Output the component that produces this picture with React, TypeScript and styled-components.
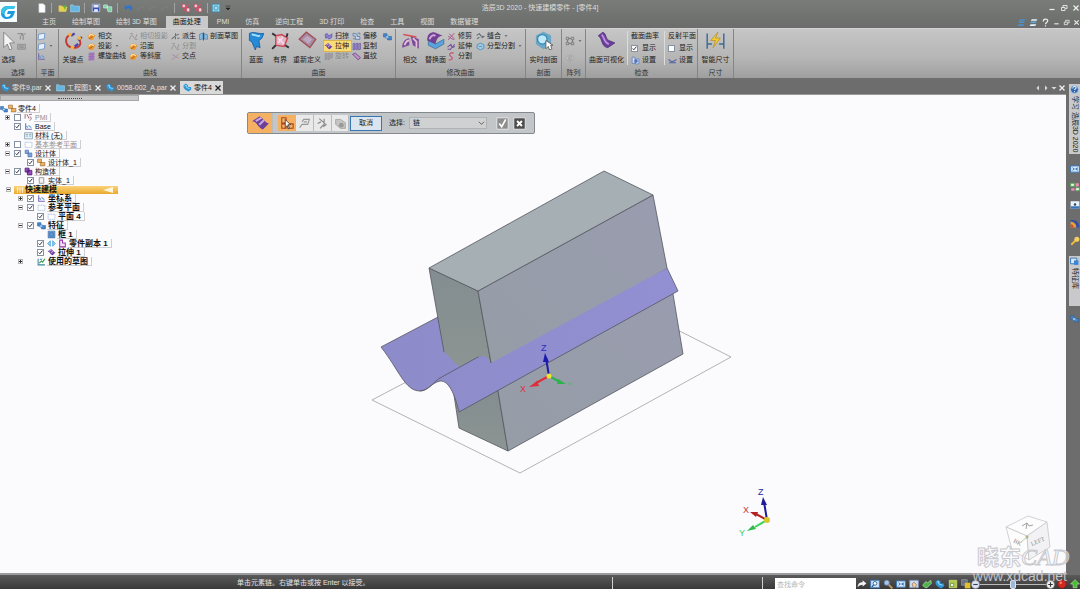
import React from "react";
import styled, { createGlobalStyle, css } from "styled-components";

const Global = createGlobalStyle`
  * { box-sizing: border-box; }
  body { margin: 0; background: #6d6d6e; }
  body, button, input, select {
    font-family: "Liberation Sans", "Noto Sans CJK SC", sans-serif;
    font-size: 7px;
    line-height: 10px;
  }
  button { border: 0; padding: 0; background: none; color: inherit; white-space: nowrap; }
  svg { display: block; flex: none; }
`;

/* ---------- icons ---------- */

const P = "#6b3f9c";
const glyphs: Record<string, React.ReactNode> = {
  arrow: <path d="M4 1v13l3-3 2 5 2-1-2-5h4z" fill="#f4f4f4" stroke="#777" strokeWidth=".7" />,
  filter: <path d="M1 3h9L6 8v5M8 2l3 4 4-4M11 6v8" fill="none" stroke="#7b7b7b" strokeWidth="1.5" />,
  box: <path d="M1 4h14v9H1zM4 7h8M4 10h8" fill="#aaa" stroke="#808080" />,
  plane: <path d="M3 4l11-2-1 10-11 2z" fill="#e6f0fb" stroke="#6d93c4" strokeWidth="1.5" />,
  sheet: <path d="M2 4h12v9H2z" fill="#fff" stroke="#a9bfe0" strokeWidth="1.5" strokeDasharray="3 1" />,
  axes: <><path d="M3 2v11h11" fill="none" stroke="#7568b4" strokeWidth="1.8" /><path d="M4 7l3 3M8 6l5 4" stroke="#5d9bd8" strokeWidth="2" /></>,
  keypoint: (
    <>
      <path d="M5 3C0 6 1 13 7 14s8-3 6-7" fill="none" stroke="#c23a35" strokeWidth="1.6" />
      <path d="M6 4l3-2M12 8l3-3M9 13l3-2" stroke="#5340a8" strokeWidth="2" />
      <circle cx="5" cy="3" r="1.5" fill="#f1b53b" /><circle cx="13" cy="6" r="1.5" fill="#f1b53b" /><circle cx="7" cy="14" r="1.5" fill="#f1b53b" />
    </>
  ),
  orange: (
    <>
      <path d="M1 7l6-5 8 4-5 8-7-1z" fill="#e9962f" />
      <path d="M3 8c3-5 6-4 9-1" fill="none" stroke="#fff0bd" strokeWidth="2" />
      <path d="M4 12l6-4" stroke="#a85517" strokeWidth="1.5" />
    </>
  ),
  helix: <path d="M3 2h10L3 5h10L3 8h10L3 11h10L3 14h10" fill="none" stroke="#9b63bd" strokeWidth="1.6" />,
  dim: <path d="M1 13c3-9 5-9 7-4s4 2 6-5M2 3h5M10 13h5" fill="none" stroke="#929292" strokeWidth="1.6" />,
  derive: <path d="M1 12c4 0 5-7 13-8M8 2v4M8 9v4M11 11h4" fill="none" stroke="#6b6b78" strokeWidth="1.8" />,
  cross: <path d="M1 13c5-1 8-5 13-10M2 5c4 0 7 5 12 6" fill="none" stroke="#a58b99" strokeWidth="1.6" />,
  section: (
    <>
      <path d="M1 4l6-2v10l-6 2zM9 3l6 2v8l-6-1z" fill="#8bbce0" stroke="#37719e" />
      <path d="M8 1v14" stroke="#24598a" strokeWidth="2" />
    </>
  ),
  blue: (
    <>
      <path d="M2 2c4-2 8 1 12 0-1 4-2 5-4 6l1 6-3-1-1 3-3-7-2-1z" fill="#258bd7" stroke="#195c9d" strokeWidth=".7" />
      <path d="M4 3c3 0 5 2 7 1" stroke="#a6def9" fill="none" strokeWidth="1.6" />
    </>
  ),
  bounded: (
    <>
      <path d="M4 4l5-1 5 3-3 7-7-1z" fill="#e3b3c6" stroke="#c94a55" strokeWidth="1.2" />
      <path d="M6 6l5 5M10 5l-4 5" stroke="#f7dfe8" strokeWidth="1.2" />
      <path d="M1 2l3 2M14 2l-1 3M1 15l3-3M15 14l-3-2" stroke="#34323b" strokeWidth="1.6" />
    </>
  ),
  redefine: (
    <>
      <path d="M1 7l6-6 8 6-5 7z" fill="#a58aa8" stroke="#a14f51" strokeWidth="1.1" />
      <path d="M4 7l4-3 4 3-3 4z" fill="#bda8bd" />
    </>
  ),
  surface: (
    <>
      <path d="M1 6l6-4c3 0 3 4 8 6l-5 5C6 12 5 6 1 6z" fill={P} />
      <path d="M4 6l5-3M7 9l4-4" stroke="#c9a6df" strokeWidth="1.8" />
    </>
  ),
  sweep: <path d="M2 5c2-4 5-2 5 0s4 2 7-2v6c-3 4-6 4-8 1L3 11z" fill="#8d7ed0" stroke="#4f3f98" />,
  offset: <path d="M2 2v5h4v6h8V8H9V4zM2 12h3M10 2h4v3" fill="#c9d9f0" stroke="#56719f" strokeWidth="1.4" />,
  copy: <path d="M2 3l3-1v11l-3 1zM7 3l3-1v11l-3 1zM12 3l3-1v11l-3 1z" fill="#a08fcb" stroke="#56409b" />,
  copyDim: <path d="M2 3l3-1v11l-3 1zM7 3l3-1v11l-3 1zM12 3l3-1v8l-3 1z" fill="#a5a5a8" stroke="#8a8a8e" />,
  ruled: <path d="M1 4l5-2 9 8-4 4z" fill="#bf8fc8" stroke="#663c87" strokeWidth="1.4" />,
  cubes: (
    <>
      <path d="M1 3h6v6H1zM8 8h7v6H8z" fill="#4788cb" stroke="#245b9c" />
      <path d="M5 7h5v4H5z" fill="#b6d8f4" stroke="#3979b7" />
    </>
  ),
  intersect: (
    <>
      <path d="M1 14c0-5 3-8 6-8v6zM8 4l7 3v8l-5-3z" fill="#7b4a98" />
      <path d="M3 12c1-3 2-4 4-4M10 6l3 3v5" stroke="#e6bfd8" strokeWidth="1.5" fill="none" />
      <path d="M2 3l11 2" stroke="#d65155" strokeWidth="1.2" />
    </>
  ),
  replace: (
    <>
      <path d="M2 8l6 3 7-4v4l-7 4-6-3z" fill="#5ba3dc" stroke="#326b9e" strokeWidth=".6" />
      <path d="M1 8c0-5 2-7 6-7l7 3c-4 0-5 3-6 7z" fill="#724093" />
      <path d="M3 7c1-3 3-4 5-3" stroke="#d5a8df" strokeWidth="1.6" fill="none" />
    </>
  ),
  trim: <path d="M2 14L13 2M4 3l9 9M2 8c4 0 5 6 11 5" fill="none" stroke="#a54f83" strokeWidth="1.6" />,
  extend: <path d="M1 9l6-5 2 6 5-2M5 14l9-10M1 13h5" fill="none" stroke="#75539c" strokeWidth="1.8" />,
  split: <path d="M12 2c-8-2-9 4-5 6s3 7-4 6" fill="none" stroke="#c45272" strokeWidth="2" />,
  stitch: <path d="M1 6l5-3 3 4 5 1-4 3M2 12l4-3" fill="none" stroke="#5b6470" strokeWidth="1.8" />,
  parting: <path d="M2 5l6-3 6 3v6l-6 3-6-3zM5 8h6" fill="#9fcbe8" stroke="#4687b2" strokeWidth="1.4" />,
  live: (
    <>
      <path d="M2 4l6-3 6 3v7l-6 4-6-4z" fill="#69a9cf" stroke="#5b9cbd" strokeWidth=".6" />
      <circle cx="7" cy="7" r="4" fill="#bfe9fb" stroke="#3386a8" />
      <path d="M10 8v7l2-2 1 3 2-1-1-3h2z" fill="#fff" stroke="#555" strokeWidth=".7" />
    </>
  ),
  pattern: <path d="M2 2h4v4H2zM10 2h4v4h-4zM2 10h4v4H2zM10 10h4v4h-4zM6 4h4M6 12h4M4 6v4M12 6v4" fill="none" stroke="#777" strokeWidth="1.4" />,
  quickModel: <path d="M3 2v12M8 2v12M13 2v12M1 6h14" fill="none" stroke="#fff3cf" strokeWidth="1.6" />,
  mirror: <path d="M8 2v13M5 4c-4 2-4 6 0 8zM11 4c4 2 4 6 0 8z" fill="#c9c9c9" stroke="#929292" strokeWidth=".8" />,
  visual: (
    <>
      <path d="M1 4l4-3c3 1 2 6 5 7l5 2-6 4C3 13 5 6 1 4z" fill={P} stroke="#482777" strokeWidth=".6" />
      <path d="M4 3c2 2 2 7 6 8" stroke="#be91db" strokeWidth="1.6" fill="none" />
    </>
  ),
  setting: (
    <>
      <path d="M2 2h5v11H2zM8 6l6-1v9H8z" fill="#cbdaf3" stroke="#4666aa" />
      <circle cx="9" cy="9" r="3" fill="#4d6ebd" />
    </>
  ),
  reflect: <path d="M1 6c4 5 9 5 14 0M2 12h12" fill="none" stroke="#4e5fa2" strokeWidth="1.8" />,
  smart: (
    <>
      <path d="M1 2v13M15 2v13M1 11h4M11 11h4" stroke="#3e6894" strokeWidth="1.2" />
      <path d="M10 1L4 8h4l-2 6 6-8H8z" fill="#f5cd2c" stroke="#b78b1c" strokeWidth=".6" />
    </>
  ),
  page: <path d="M3 1h7l3 3v11H3z" fill="#fff" stroke="#bcc4ce" />,
  folder: <><path d="M1 4h5l2 2h7l-2 8H1z" fill="#e7cf4f" /><path d="M8 4h6l-3 7z" fill="#67b843" /></>,
  disk: <><path d="M2 2h12v12H2z" fill="#3c52b0" stroke="#dce3ff" /><path d="M4 3h8v4H4zM5 10h6v4H5z" fill="#e8efff" /></>,
  saveas: <path d="M1 3h6v5H1zM6 6h8v8H8z" fill="#7fd1a2" stroke="#d7eeff" />,
  undo: <path d="M1 3l1 8 3-2c4-2 6 0 5 4 6-4 4-10-4-9L4 5z" fill="#2c74cd" />,
  redo: <path d="M3 12c0-7 7-7 10-4" stroke="#808481" fill="none" strokeWidth="1.6" />,
  redtool: <><path d="M2 2h5v5H2zM9 8h5v6H9z" fill="#f5d7e4" stroke="#d63752" /><path d="M4 13l8-11" stroke="#e74b68" strokeWidth="2" /></>,
  window: <path d="M2 2h12v12H2zM5 5h6v6H5z" fill="#a8ddf3" stroke="#4397bd" strokeWidth="1.5" />,
  part: (
    <>
      <path d="M1 4l4-3 4 3v3h5l1 4-5 4-6-3-3-4z" fill="#2e96d6" />
      <path d="M3 5l3-1v4l6 2" stroke="#9bdcf8" strokeWidth="1.6" fill="none" />
    </>
  ),
  draft: <path d="M1 3h4l2 2h8v9H1z" fill="#62b7e3" stroke="#a9dcf5" />,
  pmi: <path d="M2 2v8M5 2l4 8M9 3l5-1M10 7c4 0 4 5 0 6" fill="none" stroke="#925562" strokeWidth="1.5" />,
  asm: <path d="M1 2h7v6H1zM6 8h8v6H6z" fill="#efb160" stroke="#936024" />,
  bodies: <path d="M2 2h6v6H2zM7 7h7v7H7z" fill="#7ba3da" stroke="#3e63a8" />,
  construct: <path d="M2 2h7v7H2zM6 6h8v8H6z" fill="#9a4dc0" stroke="#4b146d" strokeWidth="1.4" />,
  solid: <path d="M4 3h8v10H4z" fill="#f4f4f4" stroke="#888" strokeWidth="1.4" />,
  material: <path d="M1 3h14v11H1zM3 6h4M3 9h4M9 6h4M9 9h4" fill="#e4f1fa" stroke="#577c91" />,
  frame: <path d="M2 2h12v12H2zM5 5h6v6H5z" fill="#6d9ed2" stroke="#27609f" />,
  library: <><path d="M1 2h11v10H1z" fill="#dceafa" stroke="#2b6fba" strokeWidth="1.6" /><path d="M7 6h8v8H7z" fill="#3a86d4" /></>,
  link: <path d="M6 3L1 8l5 5zM10 3l5 5-5 5z" fill="#8fcbee" stroke="#3f9dd5" strokeWidth="1.2" />,
  partcopy: <path d="M3 2h5v5h5v7H3z" fill="#f5e2f8" stroke="#9436a9" strokeWidth="1.8" />,
  sketch: <><path d="M2 3v11h12" fill="none" stroke="#3c8597" strokeWidth="1.8" /><path d="M4 11l4-4 2 2 4-6" stroke="#2e9b43" fill="none" strokeWidth="2" /><path d="M5 4h4" stroke="#3b6fc4" strokeWidth="1.6" /></>,
  fit: <path d="M1 3h14v10H1zM4 6l3 2-3 2M12 6l-3 2 3 2" fill="#d8eafa" stroke="#3a79b9" strokeWidth="1.6" />,
  zoomArea: <><path d="M1 2h14v12H1z" fill="#cfe4f6" stroke="#3a79b9" strokeWidth="1.5" /><circle cx="8" cy="7" r="3" fill="#fff" stroke="#2d5f93" strokeWidth="1.4" /><path d="M6 9l-3 4" stroke="#2d5f93" strokeWidth="2" /></>,
  pan: <><path d="M1 2h14v12H1z" fill="#cddcf0" stroke="#7a8fb3" strokeWidth="1.3" /><path d="M5 8l3-3 4 4-2 5H7z" fill="#f3cda5" stroke="#8c5d41" /></>,
  zoom: <><path d="M9 9l6 6" stroke="#c79a60" strokeWidth="3" /><circle cx="6" cy="6" r="4" fill="#a8c7e8" stroke="#6d90b7" strokeWidth="1.5" /></>,
  redoWhite: <path d="M1 13c0-6 4-8 8-8V2l6 5-6 5V9c-3 0-5 1-8 4z" fill="#f3f3f3" />,
  green: <path d="M1 10l5-6 3 2 5-4 1 5-7 7-4-1z" fill="#4eb14b" stroke="#c4e8bd" />,
  view: <><path d="M2 2h12v12H2z" fill="#aecb52" stroke="#e9e97a" /><path d="M4 7h5v5H4z" fill="#f3f6df" stroke="#4c7a35" /></>,
  yellow: <><path d="M1 1h9v9H1z" fill="#6a7181" stroke="#9ca6b5" /><path d="M6 6h9v9H6z" fill="#e0bf31" /></>,
  layers: <path d="M5 2h10l-2 3H3zM4 6h10l-2 3H2zM3 11h10l-2 3H1z" fill="#4f8fcc" />,
  layersWhite: <><path d="M5 2h10l-2 3H3zM3 11h10l-2 3H1z" fill="#e5f3fc" /><path d="M4 6h10l-2 3H2z" fill="#5fa3df" /></>,
  help: <><circle cx="8" cy="8" r="7" fill="#2e68b0" stroke="#dce9f7" /><path d="M5 6c0-4 6-4 6-1 0 2-3 2-3 4M8 11v2" stroke="#fff" strokeWidth="1.8" fill="none" /></>,
  palette: <><path d="M1 2h6v5H1zM9 9h6v5H9z" fill="#eaf7e6" stroke="#57a757" strokeWidth="1.6" /><path d="M9 2h5v5H9zM2 10h5v4H2z" fill="#ef8db7" /></>,
  camera: <><path d="M1 2h14v12H1z" fill="#eaf3fc" /><path d="M1 10h14v4H1z" fill="#3d73b8" /><circle cx="8" cy="7" r="2" fill="#33425c" /></>,
  rainbow: <><path d="M1 15V3h3c7 0 11 5 11 12z" fill="#3450a4" /><path d="M1 15V6c6 0 9 4 9 9z" fill="#e6a535" /><path d="M1 15v-5c3 0 5 2 5 5z" fill="#d34c31" /></>,
  key: <><path d="M2 14l8-8" stroke="#ebb73b" strokeWidth="3" /><circle cx="11" cy="5" r="4" fill="#f5cf61" /></>,
  min: <path d="M3 11h10" stroke="#eee" strokeWidth="2.5" />,
  restore: <path d="M3 7h7v6H3zM6 6V3h8v6h-3" fill="none" stroke="#eee" strokeWidth="1.8" />,
  close: <path d="M3 3l10 10M13 3L3 13" stroke="#eee" strokeWidth="2.6" />,
  closeDark: <path d="M3 3l10 10M13 3L3 13" stroke="#222" strokeWidth="2.6" />,
  question: <path d="M4 6c0-5 8-5 8-1 0 3-4 3-4 6M8 13v2" stroke="#eee" fill="none" strokeWidth="2.2" />,
  left: <path d="M10 3v10L5 8z" fill="#ddd" />,
  right: <path d="M6 3v10l5-5z" fill="#ddd" />,
  down: <path d="M3 6h10l-5 5z" fill="#ddd" />,
  more: <path d="M3 4h10M4 8h8l-4 4z" fill="#222" stroke="#222" />,
  downDark: <path d="M4 6h8l-4 4z" fill="#555" />,
  pick: <><path d="M2 2h5v6H2zM2 9h5v5H2zM9 9h6v5H9z" fill="none" stroke="#a8431a" strokeWidth="1.2" /><path d="M6 4v9l2-2 2 4 1-1-2-4h3z" fill="#fff" stroke="#222" strokeWidth=".8" /></>,
  extent: <path d="M2 13l3-4h7l2-6H7L5 6M7 6h4" fill="none" stroke="#999" strokeWidth="1.4" />,
  normal: <path d="M4 2l7 6-6 6M2 8l4-2M10 2v4M9 12l4-3" fill="none" stroke="#8a8a8a" strokeWidth="1.4" />,
  solidGrey: <><path d="M2 3h6l6 4v7H8L2 9z" fill="#c5c5c5" stroke="#a0a0a0" /><circle cx="9" cy="10" r="3" fill="#999" /></>,
  check: <><path d="M1 1h14v14H1z" fill="#8e8e8e" stroke="#f0f0f0" /><path d="M4 8l3 4 5-9" stroke="#fff" strokeWidth="2" fill="none" /></>,
  cancel: <><path d="M1 1h14v14H1z" fill="#4d4d4d" stroke="#f0f0f0" /><path d="M5 5l6 6M11 5l-6 6" stroke="#fff" strokeWidth="2.4" /></>,
  minus: <><circle cx="8" cy="8" r="7" fill="#dfe5f1" stroke="#8d9ab7" /><path d="M4 8h8" stroke="#35415f" strokeWidth="2" /></>,
  plus: <><circle cx="8" cy="8" r="7" fill="#f1f1f1" stroke="#888" /><path d="M4 8h8M8 4v8" stroke="#333" strokeWidth="2" /></>,
  record: <><circle cx="8" cy="8" r="7" fill="#d02a22" stroke="#7d1510" /><circle cx="6" cy="6" r="2" fill="#f08176" /></>,
  up: <path d="M8 1l7 7h-4v6H5V8H1z" fill="#48bd33" stroke="#b2ec9c" />,
};

const Icon = ({ n, s = 9 }: { n: string; s?: number }) => (
  <svg width={s} height={s} viewBox="0 0 16 16" aria-hidden="true">{glyphs[n]}</svg>
);

/* ---------- page frame ---------- */

const Page = styled.div`
  min-height: 100vh;
  display: grid;
  grid-template-rows: auto auto 1fr auto;
  color: #1c1c1c;
  overflow: hidden;
`;

const Header = styled.header`
  display: grid;
  grid-template-columns: 34px minmax(0, 1fr) auto minmax(0, 1fr) 34px;
  grid-template-rows: 16px 12px;
  background: linear-gradient(#797c78, #6b6c6b);
  color: #dedede;
`;
const Logo = styled.div`
  grid-row: 1 / 3;
  padding-top: 2px;
`;
const Quick = styled.div`
  display: flex;
  align-items: center;
  gap: 3px;
`;
const QuickSet = styled.div`
  display: flex;
  gap: 2px;
  padding: 0 4px 0 3px;
  border-right: 1px solid #a2a4a1;
`;
const Title = styled.h1`
  margin: 0;
  font-size: 7px;
  font-weight: 400;
  line-height: 15px;
`;
const Controls = styled.div<{ $gap: number }>`
  display: flex;
  justify-content: flex-end;
  align-items: center;
  gap: ${(p) => p.$gap}px;
`;
const WindowControls = styled(Controls)`
  grid-column: 4 / -1;
`;
const TabRow = styled.div`
  grid-column: 2 / -1;
  display: flex;
  justify-content: space-between;
`;
const TabList = styled.nav`
  display: flex;
  gap: 2px;
  padding-left: 1px;
`;
const Tab = styled.button<{ $on?: boolean }>`
  padding: 0 7px;
  line-height: 12px;
  ${(p) => p.$on && css`background: #c9c9c9; color: #111;`}
`;

/* ---------- ribbon ---------- */

const Ribbon = styled.section`
  display: flex;
  height: 50px;
  background: linear-gradient(#c6c6c6, #b5b5b5 60%, #9f9f9f);
  border-top: 1px solid #d2d2d2;
`;
const GroupBox = styled.div`
  display: flex;
  flex-direction: column;
  justify-content: space-between;
  border-right: 1px solid #858585;
`;
const GroupBody = styled.div<{ $cols: string }>`
  display: grid;
  grid-template-columns: ${(p) => p.$cols};
  padding-top: 2px;
`;
const Caption = styled.div`
  text-align: center;
  color: #333;
`;
const Group = ({ name, cols, children }: { name: string; cols: string; children: React.ReactNode }) => (
  <GroupBox><GroupBody $cols={cols}>{children}</GroupBody><Caption>{name}</Caption></GroupBox>
);
const BigButton = styled.button`
  display: flex;
  flex-direction: column;
  align-items: center;
  gap: 5px;
  overflow: visible;
`;
const Big = ({ icon, label }: { icon: string; label: string }) => (
  <BigButton><Icon n={icon} s={19} /><span>{label}</span></BigButton>
);
const Stack = styled.div`
  display: flex;
  flex-direction: column;
  align-items: flex-start;
`;
const LooseStack = styled(Stack)`
  gap: 7px;
  padding: 5px 0 0 3px;
`;
const SmallButton = styled.button<{ $on?: boolean }>`
  display: flex;
  align-items: center;
  gap: 2px;
  height: 10px;
  padding-right: 2px;
  &:disabled { color: #8b8b8b; }
  ${(p) => p.$on && css`background: #f7dc78; box-shadow: 0 0 0 1px #d9b44c;`}
`;
type Item = { icon: string; label?: string; off?: boolean; on?: boolean; menu?: boolean };
const Tools = ({ items }: { items: Item[] }) => (
  <Stack>
    {items.map((t, i) => (
      <SmallButton key={i} $on={t.on} disabled={t.off} aria-label={t.label ?? t.icon}>
        <Icon n={t.icon} />{t.label}{t.menu && <Icon n="downDark" s={6} />}
      </SmallButton>
    ))}
  </Stack>
);
const CheckColumn = styled.div`
  display: flex;
  flex-direction: column;
  align-items: flex-start;
  gap: 2px;
  padding-left: 3px;
  border-left: 1px solid #dcdcdc;
  white-space: nowrap;
`;
const CheckLabel = styled.label`
  display: flex;
  align-items: center;
  gap: 4px;
`;
const Check = styled.input.attrs({ type: "checkbox" })`
  appearance: none;
  flex: none;
  width: 7px;
  height: 7px;
  margin: 0;
  border: 1px solid #8593a3;
  background: #fff;
  &:checked {
    background: #fff url("data:image/svg+xml,%3Csvg xmlns='http://www.w3.org/2000/svg' viewBox='0 0 8 8'%3E%3Cpath d='M1 4l2 2 4-5' fill='none' stroke='%23223' stroke-width='1.5'/%3E%3C/svg%3E") center / 100%;
  }
`;

/* ---------- documents ---------- */

const Main = styled.main`
  display: grid;
  grid-template-columns: minmax(0, 1fr) 12px;
  background: #6d6d6e;
`;
const Left = styled.div`
  display: flex;
  flex-direction: column;
  padding-right: 2px;
`;
const DocBar = styled.div`
  display: flex;
  justify-content: space-between;
  height: 17px;
  padding: 3px 0 0;
  border-bottom: 1px solid #999;
`;
const DocTabs = styled.div`
  display: flex;
`;
const DocTab = styled.div<{ $on?: boolean }>`
  display: flex;
  align-items: center;
  gap: 2px;
  padding: 0 3px 0 1px;
  color: #e4e4e4;
  ${(p) => p.$on && css`background: #d9d9d9; color: #111; padding: 0 1px 0 3px;`}
`;
const DocName = styled.button`
  display: flex;
  align-items: center;
  gap: 2px;
`;

const Canvas = styled.div`
  position: relative;
  flex: 1;
  background: #fbfafd;
  border-bottom: 2px solid #9b9b9e;
`;
const Scene = styled.svg`
  position: absolute;
  inset: 0;
  width: 100%;
  height: 100%;
`;

/* ---------- feature tree ---------- */

const Pathfinder = styled.aside`
  position: relative;
  width: 139px;
`;
const Grip = styled.div`
  height: 6px;
  margin-bottom: 3px;
  display: flex;
  justify-content: center;
  align-items: center;
  background: #c4c4c4;
  border: 1px solid #a6a6a6;
  &::after { content: ""; width: 24px; border-top: 1px dotted #444; }
`;
const Row = styled.div<{ $indent: number; $bold?: boolean; $dim?: boolean }>`
  display: flex;
  align-items: center;
  height: 9px;
  padding-left: ${(p) => p.$indent}px;
  line-height: 9px;
  white-space: nowrap;
  color: ${(p) => (p.$dim ? "#8e8e8e" : "#111")};
  ${(p) => p.$bold && css`font-weight: 700; font-size: 8px;`}
`;
const Cell = styled.span<{ $w: number }>`
  display: flex;
  justify-content: center;
  width: ${(p) => p.$w}px;
`;
const Toggle = styled.button`
  width: 5px;
  height: 5px;
  border: 1px solid #b4b4b4;
  background: linear-gradient(#333, #333) center / 3px 1px no-repeat;
  &[aria-expanded="false"] {
    background: linear-gradient(#333, #333) center / 3px 1px no-repeat, linear-gradient(#333, #333) center / 1px 3px no-repeat;
  }
`;
const Name = styled.span`
  height: 9px;
  padding: 0 3px 0 1px;
  border: solid #cfcfd3;
  border-width: 0 1px 1px 0;
`;
const Current = styled.div`
  display: flex;
  align-items: center;
  justify-content: space-between;
  width: 104px;
  height: 8px;
  padding: 0 5px 0 2px;
  background: linear-gradient(#fad27a, #eba92d);
`;
const CurrentName = styled.span`
  display: flex;
  align-items: center;
  gap: 1px;
`;

type Node = { lv: 0 | 1 | 2; t?: "+" | "-"; c?: boolean; icons: string[]; label: string; bold?: boolean; dim?: boolean };
const before: Node[] = [
  { lv: 0, t: "+", c: false, icons: ["pmi"], label: "PMI", dim: true },
  { lv: 0, c: true, icons: ["axes"], label: "Base" },
  { lv: 0, icons: ["material"], label: "材料 (无)" },
  { lv: 0, t: "+", c: false, icons: ["sheet"], label: "基本参考平面", dim: true },
  { lv: 0, t: "-", c: true, icons: ["bodies"], label: "设计体" },
  { lv: 1, c: true, icons: ["asm"], label: "设计体_1" },
  { lv: 0, t: "-", c: true, icons: ["construct"], label: "构造体" },
  { lv: 1, c: true, icons: ["solid"], label: "实体_1" },
];
const after: Node[] = [
  { lv: 1, t: "+", c: true, icons: ["axes"], label: "坐标系", bold: true },
  { lv: 1, t: "-", c: true, icons: ["sheet"], label: "参考平面", bold: true },
  { lv: 2, c: true, icons: ["sheet"], label: "平面 4", bold: true },
  { lv: 1, t: "-", c: true, icons: ["cubes"], label: "特征", bold: true },
  { lv: 2, icons: ["frame"], label: "框 1", bold: true },
  { lv: 2, c: true, icons: ["link", "partcopy"], label: "零件副本 1", bold: true },
  { lv: 2, c: true, icons: ["surface"], label: "拉伸 1", bold: true },
  { lv: 1, t: "+", icons: ["sketch"], label: "使用的草图", bold: true },
];
const indents = [3, 16, 26];
const TreeRow = ({ n }: { n: Node }) => (
  <Row $indent={indents[n.lv]} $bold={n.bold} $dim={n.dim}>
    <Cell $w={9}>{n.t && <Toggle aria-expanded={n.t === "-"} aria-label={n.label} />}</Cell>
    <Cell $w={11}>{n.c !== undefined && <Check defaultChecked={n.c} aria-label={n.label} />}</Cell>
    {n.icons.map((i) => <Cell $w={11} key={i}><Icon n={i} /></Cell>)}
    <Name>{n.label}</Name>
  </Row>
);

/* ---------- command bar ---------- */

const CommandBar = styled.div`
  position: absolute;
  top: 17px;
  left: 247px;
  display: flex;
  align-items: center;
  height: 22px;
  padding-right: 8px;
  background: #c3c6c8;
  border: 1px solid #85888c;
  border-radius: 2px;
`;
const Step = styled.button<{ $on?: boolean; $w: number }>`
  display: flex;
  align-items: center;
  justify-content: center;
  width: ${(p) => p.$w}px;
  height: ${(p) => (p.$w > 20 ? 20 : 16)}px;
  background: ${(p) => (p.$on ? "#f5b163" : "#e9e9ea")};
  border-right: 1px solid #bbb;
`;
const Steps = styled.div`
  display: flex;
  margin: 0 1px 0 5px;
`;
const CancelButton = styled.button`
  width: 32px;
  height: 15px;
  border: 1px solid #3577b4;
  background: #dbe5ef;
`;
const Field = styled.label`
  display: flex;
  align-items: center;
  gap: 4px;
  margin: 0 9px 0 7px;
`;
const Picker = styled.select`
  appearance: none;
  width: 78px;
  height: 12px;
  padding: 0 3px;
  border: 1px solid #b0b2b4;
  border-radius: 0;
  color: #222;
  background: #cfd1d3 url("data:image/svg+xml,%3Csvg xmlns='http://www.w3.org/2000/svg' viewBox='0 0 8 8'%3E%3Cpath d='M1 2l3 3 3-3' fill='none' stroke='%23555'/%3E%3C/svg%3E") right 1px center / 7px no-repeat;
`;
const Finish = styled.div`
  display: flex;
  gap: 4px;
`;

/* ---------- side rail ---------- */

const Rail = styled.aside`
  display: flex;
  flex-direction: column;
  align-items: center;
  padding: 6px 0 0 1px;
  gap: 8px;
`;
const RailTools = styled.div`
  display: flex;
  flex-direction: column;
  gap: 8px;
  padding: 2px 0;
`;
const RailTab = styled.button<{ $h: number }>`
  display: flex;
  flex-direction: column;
  align-items: center;
  gap: 2px;
  width: 11px;
  height: ${(p) => p.$h}px;
  padding-top: 1px;
  background: #c9c9cb;
  color: #222;
`;
const Vertical = styled.span`
  writing-mode: vertical-rl;
  text-orientation: sideways;
`;

/* ---------- status bar ---------- */

const Status = styled.footer`
  position: relative;
  display: grid;
  grid-template-columns: minmax(0, 611fr) minmax(0, 151fr) auto;
  height: 14px;
  background: linear-gradient(#5a5a5b, #39393a);
  color: #e5e5e5;
`;
const Prompt = styled.div`
  padding-left: 237px;
  line-height: 16px;
  white-space: nowrap;
`;
const StatusCell = styled.div`
  margin: 2px 0;
  border: solid #cfcfcf;
  border-width: 0 1px;
`;
const StatusTools = styled.div`
  display: flex;
  align-items: center;
  padding: 2px 0 0 12px;
`;
const Find = styled.input`
  width: 81px;
  height: 12px;
  padding: 0 2px;
  border: 0;
  background: #fff;
  &::placeholder { color: #b5b5b5; opacity: 1; }
`;
const ViewTools = styled.div`
  display: flex;
  gap: 3px;
  padding-left: 1px;
`;
const ZoomRange = styled.input.attrs({ type: "range" })`
  appearance: none;
  width: 66px;
  height: 10px;
  margin: 0;
  background: linear-gradient(#bbb, #bbb) center / 100% 1px no-repeat;
  &::-webkit-slider-thumb { appearance: none; width: 6px; height: 9px; background: #9fb8d8; border: 1px solid #dbe6f4; border-radius: 2px; }
`;
const Ends = styled.div`
  display: flex;
  gap: 3px;
  padding-left: 2px;
`;
const Watermark = styled.div`
  position: absolute;
  right: 11px;
  bottom: 6px;
  color: rgba(255, 255, 255, 0.5);
  text-align: right;
  white-space: nowrap;
  pointer-events: none;
`;
const Brand = styled.div`
  font: 700 22px/24px "Noto Sans CJK SC", sans-serif;
  -webkit-text-stroke: 1px #c9c9ce;
  i { font: italic 400 24px/24px "Liberation Serif", serif; }
`;
const Site = styled.div`
  padding-right: 2px;
  font-size: 14px;
  line-height: 14px;
  color: #c2c2c6;
`;

const Model = () => (
  <Scene viewBox="0 95 1066 478" aria-label="零件模型">
    <defs>
      <linearGradient id="front" x1="0" y1="1" x2="1" y2="0">
        <stop offset="0" stopColor="#969da6" /><stop offset="1" stopColor="#999caf" />
      </linearGradient>
      <linearGradient id="side" x1="0" y1="0" x2="0" y2="1">
        <stop offset="0" stopColor="#838c90" /><stop offset="1" stopColor="#8c9592" />
      </linearGradient>
      <linearGradient id="wave" x1="0" y1="0" x2="1" y2="0">
        <stop offset="0" stopColor="#8d8bc9" /><stop offset="1" stopColor="#9290d2" />
      </linearGradient>
    </defs>
    <path d="M372 400L520 473L731 357L640 311L545 309Z" fill="#fbfafd" stroke="#a1a1a3" strokeWidth=".8" />
    <g stroke="#55575f" strokeWidth=".8" strokeLinejoin="round">
      <path d="M454 395L459 428L508 451L497 385Z" fill="url(#side)" />
      <path d="M497 385L672 288L683 354L508 451Z" fill="url(#front)" />
      <path d="M381 347L438 317L446 352L478 357L667 268L678 291L459 412C456 399 450 380 440 381C431 383 428 391 420 391C405 391 399 370 381 347Z" fill="url(#wave)" />
      <path d="M429 268L478 291L491 363C487 355 482 355 478 357L460 366C453 364 450 355 444 352Z" fill="url(#side)" stroke="none" />
      <path d="M444 352L429 268L478 291L491 363" fill="none" />
      <path d="M478 291L653 195L667 268L491 363Z" fill="url(#front)" stroke="none" />
      <path d="M478 291L653 195L667 268M478 291L491 363" fill="none" />
      <path d="M429 268L604 171L653 195L478 291Z" fill="#a6afb4" />
      <path d="M420 391C430 390 434 381 440 378L478 357" fill="none" />
    </g>
    <g fontFamily="Liberation Sans, sans-serif" fontSize="9">
      <path d="M549 376L546 358" stroke="#1c1ca8" strokeWidth="2" /><path d="M545 353l-2 9h6z" fill="#1c1ca8" />
      <path d="M549 376L536 383" stroke="#df2f3b" strokeWidth="2" /><path d="M529 387l8-6 2 5z" fill="#df2f3b" />
      <path d="M549 376L560 382" stroke="#2db34c" strokeWidth="2" /><path d="M566 384l-8-5-1 5z" fill="#2db34c" />
      <circle cx="549" cy="376" r="2.5" fill="#efe72e" />
      <text x="541" y="351" fill="#2b2bc0">Z</text><text x="520" y="392" fill="#df2f3b">X</text>
      <path d="M568 382l2 3 2-3" stroke="#55ba6c" fill="none" />
      <path d="M767 520L764 502" stroke="#1c1c9c" strokeWidth="2" /><path d="M763 497l-2 8h6z" fill="#1c1c9c" />
      <path d="M767 520L756 514" stroke="#b4221f" strokeWidth="2" /><path d="M750 512l8 0-2 5z" fill="#b4221f" />
      <path d="M767 520L755 527" stroke="#3bd45a" strokeWidth="2" /><path d="M747 531l6-6 3 4z" fill="#34b94f" />
      <circle cx="767" cy="520" r="3" fill="#d9c928" />
      <text x="758" y="495" fill="#2a2aa0">Z</text><text x="743" y="513" fill="#cf3030">X</text><text x="739" y="536" fill="#3ccf5b">Y</text>
    </g>
    <g fill="#fdfdfd" stroke="#c6c6c9" strokeWidth=".8" strokeLinejoin="round">
      <path d="M1006 527L1028 516L1047 522L1027 536Z" />
      <path d="M1006 527L1027 536L1029 560L1012 550Z" />
      <path d="M1027 536L1047 522L1050 547L1029 560Z" fill="#f2f2f4" />
      <path d="M1022 526l5-3 2 3 4-1M1027 523l-1 6" fill="none" stroke="#888" />
      <circle cx="1027" cy="537" r="1.5" fill="#aeb287" stroke="none" />
      <path d="M1026 538l-5 4" stroke="#9dc59d" />
    </g>
    <g fontFamily="Liberation Serif, serif" fontSize="6" fill="#888">
      <text transform="translate(1032 546) rotate(-24)">LEFT</text>
      <text transform="translate(1013 542) rotate(28)">BK</text>
    </g>
  </Scene>
);

const docs = [
  { icon: "part", name: "零件9.par" },
  { icon: "draft", name: "工程图1" },
  { icon: "part", name: "0058-002_A.par" },
  { icon: "part", name: "零件4", on: true },
];
const tabs = ["主页", "绘制草图", "绘制 3D 草图", "曲面处理", "PMI", "仿真", "逆向工程", "3D 打印", "检查", "工具", "视图", "数据管理"];
const quick = [["page"], ["folder", "draft"], ["disk", "saveas"], ["undo", "redo", "redo", "redo"], ["redtool", "redtool"]];

export default function App() {
  return (
    <Page>
      <Global />
      <Header>
        <Logo>
          <svg width="17" height="20" viewBox="0 0 17 20">
            <path d="M0 0h17v20H0z" fill="#f7fcff" />
            <path d="M15 4H8C3 4 1 7 1 11s3 6 6 6c5 0 7-3 8-8H8l-1 3h4c-1 2-2 3-4 3-4 0-3-8 2-8h5z" fill="#1a9ae0" />
            <path d="M1 11c0-4 2-7 7-7h7l-1 3H9c-4 0-5 2-5 5z" fill="#35c5e8" />
          </svg>
        </Logo>
        <Quick>
          {quick.map((set, i) => (
            <QuickSet key={i}>{set.map((n, j) => <button key={j} aria-label={n}><Icon n={n} s={10} /></button>)}</QuickSet>
          ))}
          <button aria-label="window"><Icon n="window" s={10} /></button>
          <button aria-label="more"><Icon n="more" s={8} /></button>
        </Quick>
        <Title>浩辰3D 2020 - 快速建模零件 - [零件4]</Title>
        <WindowControls $gap={4}>
          {["min", "restore", "close"].map((n) => <button key={n} aria-label={n}><Icon n={n} s={8} /></button>)}
        </WindowControls>
        <TabRow>
          <TabList>{tabs.map((t) => <Tab key={t} $on={t === "曲面处理"}>{t}</Tab>)}</TabList>
          <Controls $gap={3}>
            {["layers", "layersWhite", "question", "min", "restore", "close"].map((n, i) => (
              <button key={n} aria-label={n}><Icon n={n} s={i < 3 ? 9 : 7} /></button>
            ))}
          </Controls>
        </TabRow>
      </Header>

      <Ribbon>
        <Group name="选择" cols="17px 19px">
          <Big icon="arrow" label="选择" />
          <Tools items={[{ icon: "filter", off: true }, { icon: "box", off: true }]} />
        </Group>
        <Group name="平面" cols="21px">
          <Tools items={[{ icon: "plane" }, { icon: "plane", menu: true }, { icon: "axes" }]} />
        </Group>
        <Group name="曲线" cols="28px 42px 42px 28px 42px">
          <Big icon="keypoint" label="关键点" />
          <Tools items={[{ icon: "orange", label: "相交" }, { icon: "orange", label: "投影", menu: true }, { icon: "helix", label: "螺旋曲线" }]} />
          <Tools items={[{ icon: "dim", label: "相切投影", off: true }, { icon: "orange", label: "沿面" }, { icon: "orange", label: "等斜度" }]} />
          <Tools items={[{ icon: "derive", label: "派生" }, { icon: "dim", label: "分割", off: true }, { icon: "cross", label: "交点" }]} />
          <Tools items={[{ icon: "section", label: "剖面草图" }]} />
        </Group>
        <Group name="曲面" cols="28px 20px 34px 28px 31px 12px">
          <Big icon="blue" label="蓝面" />
          <Big icon="bounded" label="有界" />
          <Big icon="redefine" label="重新定义" />
          <Tools items={[{ icon: "sweep", label: "扫掠" }, { icon: "surface", label: "拉伸", on: true }, { icon: "copyDim", label: "旋转", off: true }]} />
          <Tools items={[{ icon: "offset", label: "偏移" }, { icon: "copy", label: "复制" }, { icon: "ruled", label: "直纹" }]} />
          <Tools items={[{ icon: "cubes" }]} />
        </Group>
        <Group name="修改曲面" cols="28px 23px 29px 49px">
          <Big icon="intersect" label="相交" />
          <Big icon="replace" label="替换面" />
          <Tools items={[{ icon: "trim", label: "修剪" }, { icon: "extend", label: "延伸" }, { icon: "split", label: "分割" }]} />
          <Tools items={[{ icon: "stitch", label: "缝合", menu: true }, { icon: "parting", label: "分型分割", menu: true }]} />
        </Group>
        <Group name="剖面" cols="35px"><Big icon="live" label="实时剖面" /></Group>
        <Group name="阵列" cols="23px">
          <LooseStack>
            <SmallButton aria-label="阵列"><Icon n="pattern" s={10} /><Icon n="downDark" s={6} /></SmallButton>
            <SmallButton aria-label="镜像"><Icon n="mirror" s={10} /></SmallButton>
          </LooseStack>
        </Group>
        <Group name="检查" cols="41px 37px 33px">
          <Big icon="visual" label="曲面可视化" />
          <CheckColumn>
            <span>截面曲率</span>
            <CheckLabel><Check defaultChecked />显示</CheckLabel>
            <SmallButton><Icon n="setting" />设置</SmallButton>
          </CheckColumn>
          <CheckColumn>
            <span>反射平面</span>
            <CheckLabel><Check />显示</CheckLabel>
            <SmallButton><Icon n="reflect" />设置</SmallButton>
          </CheckColumn>
        </Group>
        <Group name="尺寸" cols="35px"><Big icon="smart" label="智能尺寸" /></Group>
      </Ribbon>

      <Main>
        <Left>
          <DocBar>
            <DocTabs>
              {docs.map((d) => (
                <DocTab key={d.name} $on={d.on}>
                  <DocName><Icon n={d.icon} />{d.name}</DocName>
                  <button aria-label={`关闭 ${d.name}`}><Icon n={d.on ? "closeDark" : "close"} s={8} /></button>
                </DocTab>
              ))}
            </DocTabs>
            <Controls $gap={0}>
              {["left", "right", "down", "close"].map((n) => <button key={n} aria-label={n}><Icon n={n} s={8} /></button>)}
            </Controls>
          </DocBar>
          <Canvas>
            <Model />
            <Pathfinder>
              <Grip />
              <Row $indent={0}>
                <Icon n="cubes" s={8} /><Icon n="asm" /><Name>零件4</Name>
              </Row>
              {before.map((n) => <TreeRow key={n.label} n={n} />)}
              <Row $indent={3} $bold>
                <Cell $w={11}><Toggle aria-expanded aria-label="快速建模" /></Cell>
                <Current>
                  <CurrentName><Icon n="quickModel" s={8} />快速建模</CurrentName>
                  <svg width="10" height="6" viewBox="0 0 10 6"><path d="M0 3l10-3v6z" fill="#fff5dc" /></svg>
                </Current>
              </Row>
              {after.map((n) => <TreeRow key={n.label} n={n} />)}
            </Pathfinder>
            <CommandBar>
              <Step $on $w={25} aria-label="拉伸"><Icon n="surface" s={19} /></Step>
              <Steps>
                <Step $on $w={18} aria-label="选择"><Icon n="pick" s={14} /></Step>
                <Step $w={18} aria-label="范围"><Icon n="extent" s={13} /></Step>
                <Step $w={18} aria-label="方向"><Icon n="normal" s={13} /></Step>
                <Step $w={17} aria-label="处理"><Icon n="solidGrey" s={13} /></Step>
              </Steps>
              <CancelButton>取消</CancelButton>
              <Field>选择:<Picker defaultValue="链"><option>链</option></Picker></Field>
              <Finish>
                <button aria-label="接受"><Icon n="check" s={13} /></button>
                <button aria-label="取消选择"><Icon n="cancel" s={13} /></button>
              </Finish>
            </CommandBar>
          </Canvas>
        </Left>
        <Rail>
          <RailTab $h={70}><Icon n="help" /><Vertical>学习 浩辰3D 2020</Vertical></RailTab>
          <RailTools>
            {["fit", "palette", "camera", "rainbow", "key"].map((n) => <button key={n} aria-label={n}><Icon n={n} s={10} /></button>)}
          </RailTools>
          <RailTab $h={50}><Icon n="library" /><Vertical>特征库</Vertical></RailTab>
          <Icon n="cubes" s={9} />
        </Rail>
      </Main>

      <Status>
        <Prompt>单击元素链。右键单击或按 Enter 以接受。</Prompt>
        <StatusCell />
        <StatusTools>
          <Find placeholder="查找命令" aria-label="查找命令" />
          <ViewTools>
            {["redoWhite", "zoomArea", "zoom", "fit", "pan", "green", "part", "view", "yellow"].map((n) => (
              <button key={n} aria-label={n}><Icon n={n} s={10} /></button>
            ))}
          </ViewTools>
          <button aria-label="缩小"><Icon n="minus" s={9} /></button>
          <ZoomRange aria-label="缩放" />
          <button aria-label="放大"><Icon n="plus" s={9} /></button>
          <Ends>
            <button aria-label="录制"><Icon n="record" s={10} /></button>
            <button aria-label="上传"><Icon n="up" s={10} /></button>
          </Ends>
        </StatusTools>
        <Watermark>
          <Brand>晓东<i>CAD</i></Brand>
          <Site>www.xdcad.net</Site>
        </Watermark>
      </Status>
    </Page>
  );
}
